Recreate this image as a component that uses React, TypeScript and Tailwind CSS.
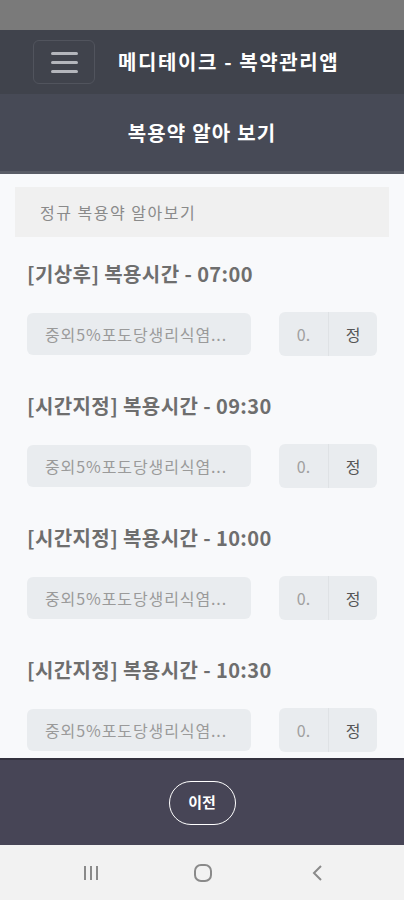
import React from 'react';

const font = { fontFamily: '"Noto Sans CJK KR", "Noto Sans", sans-serif' };

const schedules = [
  { type: '기상후', time: '07:00' },
  { type: '시간지정', time: '09:30' },
  { type: '시간지정', time: '10:00' },
  { type: '시간지정', time: '10:30' },
];

const App: React.FC = () => {
  return (
    <div className="w-[404px] h-[900px] flex flex-col overflow-hidden bg-[#f8f9fb]" style={font}>
      {/* status bar */}
      <div className="h-[30px] bg-[#7a7a7a] shrink-0" />

      {/* app header */}
      <div className="h-[64px] bg-[#40434c] flex items-center px-[33px] shrink-0">
        <button className="w-[62px] h-[44px] rounded-md border border-[#51545d] flex flex-col items-center justify-center gap-[6px]">
          <span className="block w-[27px] h-[3px] rounded bg-[#b4b6bc]" />
          <span className="block w-[27px] h-[3px] rounded bg-[#b4b6bc]" />
          <span className="block w-[27px] h-[3px] rounded bg-[#b4b6bc]" />
        </button>
        <h1 className="ml-[23px] text-[20px] font-bold text-white tracking-[1.6px] whitespace-nowrap">메디테이크 - 복약관리앱</h1>
      </div>

      <div className="h-[80px] bg-[#474a56] flex items-center justify-center shrink-0 border-b-[3px] border-[#595c66]">
        <h2 className="text-[20px] font-bold text-white tracking-[1.2px]">복용약 알아 보기</h2>
      </div>

      {/* content */}
      <div className="flex-1 overflow-hidden pt-[13px]">
        <div className="mx-[15px] h-[50px] bg-[#f0f0f0] flex items-center pl-[25px] text-[16px] tracking-[1.5px] text-[#8a8a8a]">
          정규 복용약 알아보기
        </div>

        <div className="px-[27px] pt-[20px]">
          {schedules.map((s, i) => (
            <div key={i} className="h-[132px]">
              <h3 className="text-[20px] font-bold text-[#6e6e6e] leading-[34px] tracking-[0.4px] whitespace-nowrap">
                [{s.type}] 복용시간 - {s.time}
              </h3>
              <div className="mt-[21px] flex items-center">
                <div className="w-[224px] h-[42px] shrink-0 overflow-hidden rounded-md bg-[#e9ecef] flex items-center pl-[18px] text-[16px] tracking-[0.9px] text-[#9a9a9a] whitespace-nowrap">
                  중외5%포도당생리식염...
                </div>
                <div className="ml-[28px] flex shrink-0">
                  <div className="w-[49px] h-[44px] rounded-l-md bg-[#e9ecef] flex items-center justify-center text-[16px] text-[#a0a0a0]">
                    0.
                  </div>
                  <div className="w-[49px] h-[44px] rounded-r-md bg-[#e9ecef] border-l border-[#dfe2e5] flex items-center justify-center text-[16px] text-[#555]">
                    정
                  </div>
                </div>
              </div>
            </div>
          ))}
        </div>
      </div>

      {/* bottom bar */}
      <div className="h-[87px] bg-[#474556] border-t-2 border-[#34323f] flex items-center justify-center shrink-0">
        <button className="w-[67px] h-[44px] rounded-full border-[1.5px] border-white text-white text-[15px] font-bold">
          이전
        </button>
      </div>

      {/* android nav */}
      <div className="h-[55px] bg-[#f2f2f2] flex items-center pl-[81px] shrink-0">
        <svg width="20" height="18" viewBox="0 0 20 18">
          <g stroke="#8a8a8a" strokeWidth="2">
            <line x1="4" y1="2" x2="4" y2="16" />
            <line x1="10" y1="2" x2="10" y2="16" />
            <line x1="16" y1="2" x2="16" y2="16" />
          </g>
        </svg>
        <svg className="ml-[91px]" width="22" height="22" viewBox="0 0 22 22">
          <rect x="3" y="3" width="16" height="16" rx="6" fill="none" stroke="#8a8a8a" strokeWidth="2" />
        </svg>
        <svg className="ml-[97px]" width="14" height="20" viewBox="0 0 14 20">
          <polyline points="10,3 3,10 10,17" fill="none" stroke="#8a8a8a" strokeWidth="2" />
        </svg>
      </div>
    </div>
  );
};

export default App;
